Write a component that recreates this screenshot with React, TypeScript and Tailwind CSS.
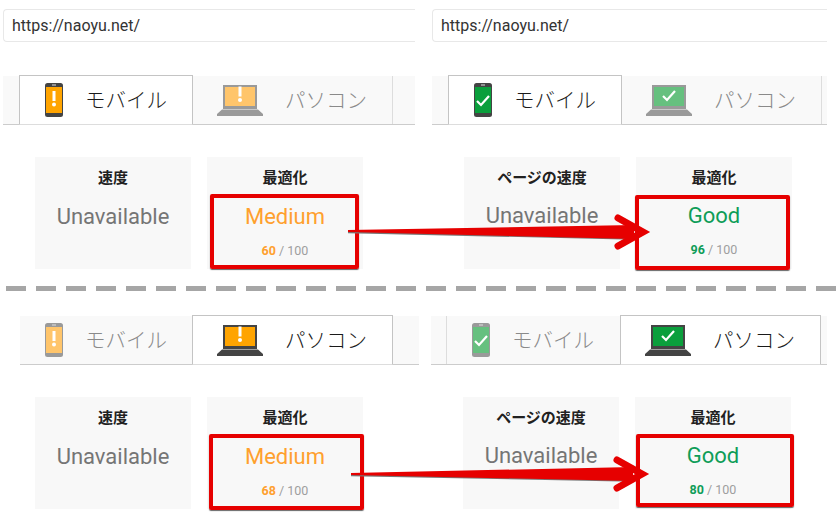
const FONT = "font-['Roboto','Noto_Sans_CJK_JP',sans-serif]";

type Status = "warn" | "ok";

function Mark({ status, cx, cy }: { status: Status; cx: number; cy: number }) {
  if (status === "warn") {
    return (
      <g fill="#fff">
        <rect x={cx - 1.5} y={cy - 8} width={3} height={10} />
        <circle cx={cx} cy={cy + 5.5} r={2} />
      </g>
    );
  }
  return (
    <polyline
      points={`${cx - 6},${cy} ${cx - 2},${cy + 4} ${cx + 6},${cy - 5}`}
      fill="none"
      stroke="#fff"
      strokeWidth={2.2}
    />
  );
}

function Phone({ status, active }: { status: Status; active: boolean }) {
  const body = active ? "#444444" : "#9a9a9a";
  let screen = status === "warn" ? "#ffa400" : "#0a9f3c";
  if (!active) screen = status === "warn" ? "#ffc56b" : "#66c07f";
  return (
    <svg width="18" height="34" viewBox="0 0 18 34" className="shrink-0">
      <rect width="18" height="34" rx="2.5" fill={body} />
      <rect x="1" y="4" width="16" height="26" fill={screen} />
      <rect x="7" y="1.5" width="4" height="1" fill="#ddd" />
      <Mark status={status} cx={9} cy={status === "warn" ? 16 : 18} />
    </svg>
  );
}

function Laptop({ status, active }: { status: Status; active: boolean }) {
  const body = active ? "#444444" : "#9a9a9a";
  let screen = status === "warn" ? "#ffa400" : "#0a9f3c";
  if (!active) screen = status === "warn" ? "#ffc56b" : "#66c07f";
  return (
    <svg width="46" height="31" viewBox="0 0 46 31" className="shrink-0">
      <rect x="6" y="0" width="34" height="24" fill={body} />
      <rect x="8" y="2" width="30" height="19" fill={screen} />
      <polygon points="5,24.5 41,24.5 46,29 46,31 0,31 0,29" fill={body} />
      <Mark status={status} cx={23} cy={status === "warn" ? 9.5 : 11} />
    </svg>
  );
}

function UrlBar() {
  return (
    <div className="flex h-[33px] items-center rounded-l-sm border border-r-0 border-[#e8e8e8] bg-white pl-2 text-[16px] text-[#333]">
      https://naoyu.net/
    </div>
  );
}

function Tabs({
  status,
  active,
  spacer,
  mobileWidth,
  pcWidth,
}: {
  status: Status;
  active: "mobile" | "pc";
  spacer: boolean;
  mobileWidth: string;
  pcWidth: string;
}) {
  const activeCls = "-my-px border border-[#c4c4c4] border-b-[#dddddd] bg-white text-[#1a1a1a]";
  const idleCls = "text-[#8a8a8a]";
  return (
    <div className="flex h-[49px] border-b border-[#cccccc] bg-[#f9f9f9]">
      {spacer && <div className={active === "pc" ? "w-4 border-r border-[#dddddd]" : "w-4"} />}
      <div className={`flex items-center pl-[25px] ${mobileWidth} ${active === "mobile" ? activeCls : idleCls}`}>
        <Phone status={status} active={active === "mobile"} />
        <span className="mt-0.5 ml-[22px] text-[20.5px] font-light">モバイル</span>
      </div>
      <div
        className={`flex items-center pl-6 ${pcWidth} ${
          active === "pc" ? activeCls : `${idleCls} border-r border-[#dddddd]`
        }`}
      >
        <Laptop status={status} active={active === "pc"} />
        <span className="mt-0.5 ml-[22px] text-[20.5px] font-light">パソコン</span>
      </div>
    </div>
  );
}

function Card({
  title,
  label,
  labelCls,
  score,
  scoreCls,
  gapCls,
  boxCls,
}: {
  title: string;
  label: string;
  labelCls: string;
  score?: number;
  scoreCls?: string;
  gapCls: string;
  boxCls?: string;
}) {
  return (
    <div className="relative flex h-[112px] w-[156px] flex-col items-center bg-[#f8f8f8] pt-[11px]">
      <div className="text-[15px] leading-5 font-bold text-[#212121]">{title}</div>
      <div className={`text-[22px] leading-7 ${gapCls} ${labelCls}`}>{label}</div>
      {score !== undefined && (
        <div className="mt-3 text-[12.5px] leading-4 text-[#9e9e9e]">
          <span className={`font-bold ${scoreCls}`}>{score}</span> / 100
        </div>
      )}
      {boxCls && (
        <div className={`absolute rounded-[2px] border-4 border-[#e60000] shadow-[0_1px_1px_#666] ${boxCls}`} />
      )}
    </div>
  );
}

function Panel({
  className,
  status,
  active,
  spacer,
  url,
  tabsCls,
  cardsCls,
  mobileWidth,
  pcWidth,
  speedTitle,
  score,
  boxCls,
  gapCls,
}: {
  className: string;
  status: Status;
  active: "mobile" | "pc";
  spacer: boolean;
  url: boolean;
  tabsCls: string;
  cardsCls: string;
  mobileWidth: string;
  pcWidth: string;
  speedTitle: string;
  score: number;
  boxCls: string;
  gapCls: string;
}) {
  const warn = status === "warn";
  return (
    <div className={className}>
      {url && (
        <div className="pt-[9px]">
          <UrlBar />
        </div>
      )}
      <div className={tabsCls}>
        <Tabs status={status} active={active} spacer={spacer} mobileWidth={mobileWidth} pcWidth={pcWidth} />
      </div>
      <div className={`mt-8 flex gap-4 ${cardsCls}`}>
        <Card title={speedTitle} label="Unavailable" labelCls="text-[#757575]" gapCls={gapCls} />
        <Card
          title="最適化"
          label={warn ? "Medium" : "Good"}
          labelCls={warn ? "text-[#ffa02e]" : "text-[#0f9d58]"}
          score={score}
          scoreCls={warn ? "text-[#ffa02e]" : "text-[#0f9d58]"}
          gapCls={gapCls}
          boxCls={boxCls}
        />
      </div>
    </div>
  );
}

function Arrow({ x1, x2, y, tail }: { x1: number; x2: number; y: number; tail: number }) {
  const bx = x2 - 30;
  return (
    <g>
      <polygon
        points={`${x1},${y + tail} ${x2 - 14},${y - 6} ${x2 - 14},${y + 7} ${x1},${y + tail + 1.5}`}
        fill="#777"
        transform="translate(0 0.7)"
      />
      <polygon
        points={`${x1},${y + tail - 1} ${x2 - 14},${y - 7} ${x2 - 14},${y + 7} ${x1},${y + tail + 1}`}
        fill="#e60000"
      />
      <polyline
        points={`${bx},${y - 14} ${x2 - 5},${y} ${bx},${y + 14}`}
        fill="none"
        stroke="#e60000"
        strokeWidth={7}
        strokeLinecap="round"
        strokeLinejoin="miter"
      />
    </g>
  );
}

export default function App() {
  return (
    <div className={`relative flex h-[519px] w-[836px] flex-col overflow-hidden bg-white ${FONT}`}>
      <div className="flex h-[286px]">
        <Panel
          className="w-[432px] pr-[17px] pl-[3px]"
          status="warn"
          active="mobile"
          spacer
          url
          tabsCls="mt-[34px]"
          cardsCls="ml-8"
          mobileWidth="w-[174px]"
          pcWidth="w-[200px]"
          speedTitle="速度"
          score={60}
          boxCls="left-[3px] top-[37px] h-[75px] w-[149px]"
          gapCls="mt-[15px]"
        />
        <Panel
          className="w-[395px]"
          status="ok"
          active="mobile"
          spacer
          url
          tabsCls="mt-[34px]"
          cardsCls="ml-8"
          mobileWidth="w-[174px]"
          pcWidth="w-[200px]"
          speedTitle="ページの速度"
          score={96}
          boxCls="-left-px top-[38px] h-[75px] w-[155px]"
          gapCls="mt-[14px]"
        />
      </div>

      <div className="flex h-[5px] gap-[10px] pl-[6px]">
        {Array.from({ length: 28 }).map((_, i) => (
          <div key={i} className="h-[5px] w-5 shrink-0 bg-[#a6a6a6]" />
        ))}
      </div>

      <div className="flex flex-1">
        <Panel
          className="w-[431px] pr-3 pl-5"
          status="warn"
          active="pc"
          spacer={false}
          url={false}
          tabsCls="mt-[25px]"
          cardsCls="ml-[15px]"
          mobileWidth="w-[172px]"
          pcWidth="w-[201px]"
          speedTitle="速度"
          score={68}
          boxCls="left-[2px] top-[37px] h-[76px] w-[155px]"
          gapCls="mt-[15px]"
        />
        <Panel
          className="w-[396px]"
          status="ok"
          active="pc"
          spacer
          url={false}
          tabsCls="mt-[25px]"
          cardsCls="ml-8"
          mobileWidth="w-[173px]"
          pcWidth="w-[201px]"
          speedTitle="ページの速度"
          score={80}
          boxCls="left-px top-[37px] h-[73px] w-[158px]"
          gapCls="mt-[14px]"
        />
      </div>

      <svg width="836" height="519" className="pointer-events-none absolute inset-0">
        <Arrow x1={348} x2={648} y={232} tail={-1} />
        <Arrow x1={351} x2={647} y={474} tail={0} />
      </svg>
    </div>
  );
}
